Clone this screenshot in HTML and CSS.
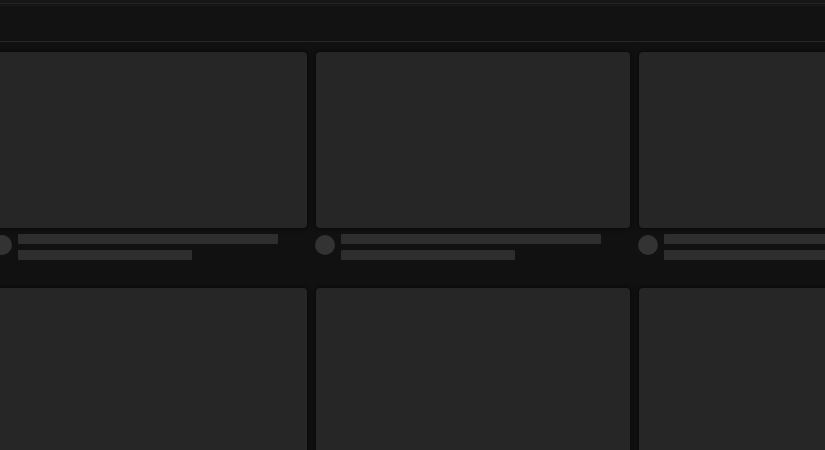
FILE: index.html
```
<!DOCTYPE html>
<html>
<head>
<meta charset="utf-8">
<link rel="stylesheet" href="styles.css">
</head>
<body>
<div class="topline"></div>
<header class="header"></header>
<main class="feed">
  <div class="grid">
    <div class="item"><div class="thumb"></div><div class="meta"><div class="avatar"></div><div class="lines"><div class="line l1"></div><div class="line l2"></div></div></div></div>
    <div class="item"><div class="thumb"></div><div class="meta"><div class="avatar"></div><div class="lines"><div class="line l1"></div><div class="line l2"></div></div></div></div>
    <div class="item"><div class="thumb"></div><div class="meta"><div class="avatar"></div><div class="lines"><div class="line l1"></div><div class="line l2"></div></div></div></div>
    <div class="item"><div class="thumb"></div><div class="meta"><div class="avatar"></div><div class="lines"><div class="line l1"></div><div class="line l2"></div></div></div></div>
    <div class="item"><div class="thumb"></div><div class="meta"><div class="avatar"></div><div class="lines"><div class="line l1"></div><div class="line l2"></div></div></div></div>
    <div class="item"><div class="thumb"></div><div class="meta"><div class="avatar"></div><div class="lines"><div class="line l1"></div><div class="line l2"></div></div></div></div>
  </div>
</main>
</body>
</html>
```
FILE: styles.css
```
html, body {
  margin: 0;
  padding: 0;
  background: #111111;
  overflow: hidden;
  height: 450px;
}
body {
  font-family: "Liberation Sans", Arial, sans-serif;
}
.topline {
  height: 3px;
  background: #171717;
  border-bottom: 1px solid #262626;
}
.header {
  height: 35px;
  margin-top: 1px;
  border-top: 1px solid #1a1a1a;
  border-bottom: 1px solid #262626;
  background: #121212;
}
.feed {
  padding-top: 10px;
}
.grid {
  display: grid;
  grid-template-columns: repeat(3, 314px);
  column-gap: 9px;
  row-gap: 0;
  margin-left: -7px;
}
.item {
  height: 236px;
}
.thumb {
  height: 176px;
  background: #262626;
  border-radius: 4px;
  box-shadow: 0 0 4px 1px rgba(0, 0, 0, 0.55);
}
.meta {
  display: flex;
  gap: 6px;
  padding-top: 6px;
  margin-left: -1px;
}
.avatar {
  width: 20px;
  height: 20px;
  border-radius: 50%;
  background: #333333;
  flex: none;
  margin-top: 0.5px;
}
.lines {
  display: flex;
  flex-direction: column;
  gap: 6px;
}
.line {
  height: 10px;
  background: #2e2e2e;
  border-radius: 1px;
}
.l1 { width: 260px; }
.l2 { width: 174px; }
```
